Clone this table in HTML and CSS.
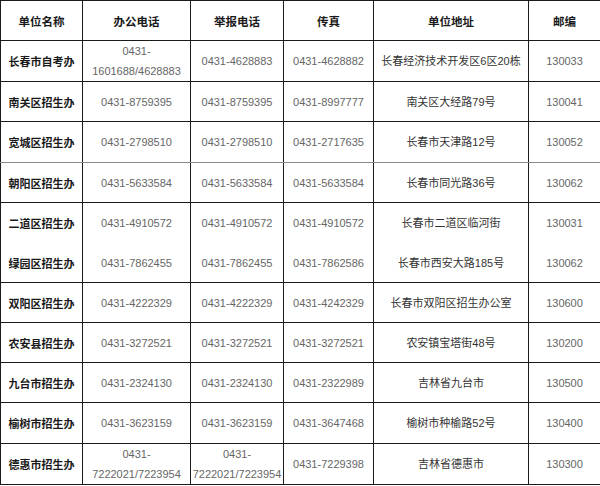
FILE: index.html
```html
<!DOCTYPE html>
<html lang="zh-CN">
<head>
<meta charset="utf-8">
<title>招生办联系方式</title>
<link rel="stylesheet" href="styles.css">
</head>
<body>
<table class="tbl">
  <colgroup>
    <col class="c1"><col class="c2"><col class="c3"><col class="c4"><col class="c5"><col class="c6">
  </colgroup>
  <thead>
    <tr class="r40">
      <th>单位名称</th><th>办公电话</th><th>举报电话</th><th>传真</th><th>单位地址</th><th>邮编</th>
    </tr>
  </thead>
  <tbody>
    <tr class="r41">
      <td class="name">长春市自考办</td><td class="two">0431-<br>1601688/4628883</td><td>0431-4628883</td><td>0431-4628882</td><td class="addr">长春经济技术开发区6区20栋</td><td>130033</td>
    </tr>
    <tr class="r40">
      <td class="name">南关区招生办</td><td>0431-8759395</td><td>0431-8759395</td><td>0431-8997777</td><td class="addr">南关区大经路79号</td><td>130041</td>
    </tr>
    <tr class="r41 light">
      <td class="name">宽城区招生办</td><td>0431-2798510</td><td>0431-2798510</td><td>0431-2717635</td><td class="addr">长春市天津路12号</td><td>130052</td>
    </tr>
    <tr class="r40">
      <td class="name">朝阳区招生办</td><td>0431-5633584</td><td>0431-5633584</td><td>0431-5633584</td><td class="addr">长春市同光路36号</td><td>130062</td>
    </tr>
    <tr class="r41 nob">
      <td class="name">二道区招生办</td><td>0431-4910572</td><td>0431-4910572</td><td>0431-4910572</td><td class="addr">长春市二道区临河街</td><td>130031</td>
    </tr>
    <tr class="r40 not">
      <td class="name">绿园区招生办</td><td>0431-7862455</td><td>0431-7862455</td><td>0431-7862586</td><td class="addr">长春市西安大路185号</td><td>130062</td>
    </tr>
    <tr class="r40">
      <td class="name">双阳区招生办</td><td>0431-4222329</td><td>0431-4222329</td><td>0431-4242329</td><td class="addr">长春市双阳区招生办公室</td><td>130600</td>
    </tr>
    <tr class="r40">
      <td class="name">农安县招生办</td><td>0431-3272521</td><td>0431-3272521</td><td>0431-3272521</td><td class="addr">农安镇宝塔街48号</td><td>130200</td>
    </tr>
    <tr class="r40">
      <td class="name">九台市招生办</td><td>0431-2324130</td><td>0431-2324130</td><td>0431-2322989</td><td class="addr">吉林省九台市</td><td>130500</td>
    </tr>
    <tr class="r41">
      <td class="name">榆树市招生办</td><td>0431-3623159</td><td>0431-3623159</td><td>0431-3647468</td><td class="addr">榆树市种榆路52号</td><td>130400</td>
    </tr>
    <tr class="r41">
      <td class="name">德惠市招生办</td><td class="two">0431-<br>7222021/7223954</td><td class="two">0431-<br>7222021/7223954</td><td>0431-7229398</td><td class="addr">吉林省德惠市</td><td>130300</td>
    </tr>
  </tbody>
</table>
</body>
</html>
```

FILE: styles.css
```css
html, body {
  margin: 0;
  padding: 0;
  background: #ffffff;
}

.tbl {
  border-collapse: collapse;
  table-layout: fixed;
  width: 600px;
  font-family: "Liberation Sans", "Noto Sans CJK SC", sans-serif;
  font-size: 11px;
  color: #666666;
}

.c1 { width: 82px; }
.c2 { width: 108px; }
.c3 { width: 93px; }
.c4 { width: 90px; }
.c5 { width: 155px; }
.c6 { width: 72px; }

.tbl th,
.tbl td {
  padding: 0;
  text-align: center;
  vertical-align: middle;
  border-top: 1px solid #1a1a1a;
  border-bottom: 1px solid #1a1a1a;
  border-left: 1px solid #1a1a1a;
  border-right: 1px solid #1a1a1a;
  white-space: nowrap;
  line-height: 20px;
}

.tbl th:nth-child(2),
.tbl td:nth-child(2),
.tbl th:nth-child(3),
.tbl td:nth-child(3),
.tbl th:nth-child(6),
.tbl td:nth-child(6) {
  border-left-color: #8a8a8a;
}

.tbl th:nth-child(4),
.tbl td:nth-child(4) {
  border-left-color: #555555;
}

.tbl th {
  font-family: "Noto Sans CJK SC", sans-serif;
  font-weight: bold;
  font-size: 11.5px;
  color: #1a1a1a;
}

.tbl .r40 > * { height: 39px; }
.tbl .r41 > * { height: 40px; }

.tbl .name {
  font-family: "Noto Sans CJK SC", sans-serif;
  font-weight: bold;
  color: #1a1a1a;
  font-size: 11px;
}

.tbl .addr {
  color: #333333;
}

.tbl .light > td {
  border-bottom-color: #8a8a8a;
}

.tbl .nob > td {
  border-bottom: none;
}

.tbl .not > td {
  border-top: none;
}
```
